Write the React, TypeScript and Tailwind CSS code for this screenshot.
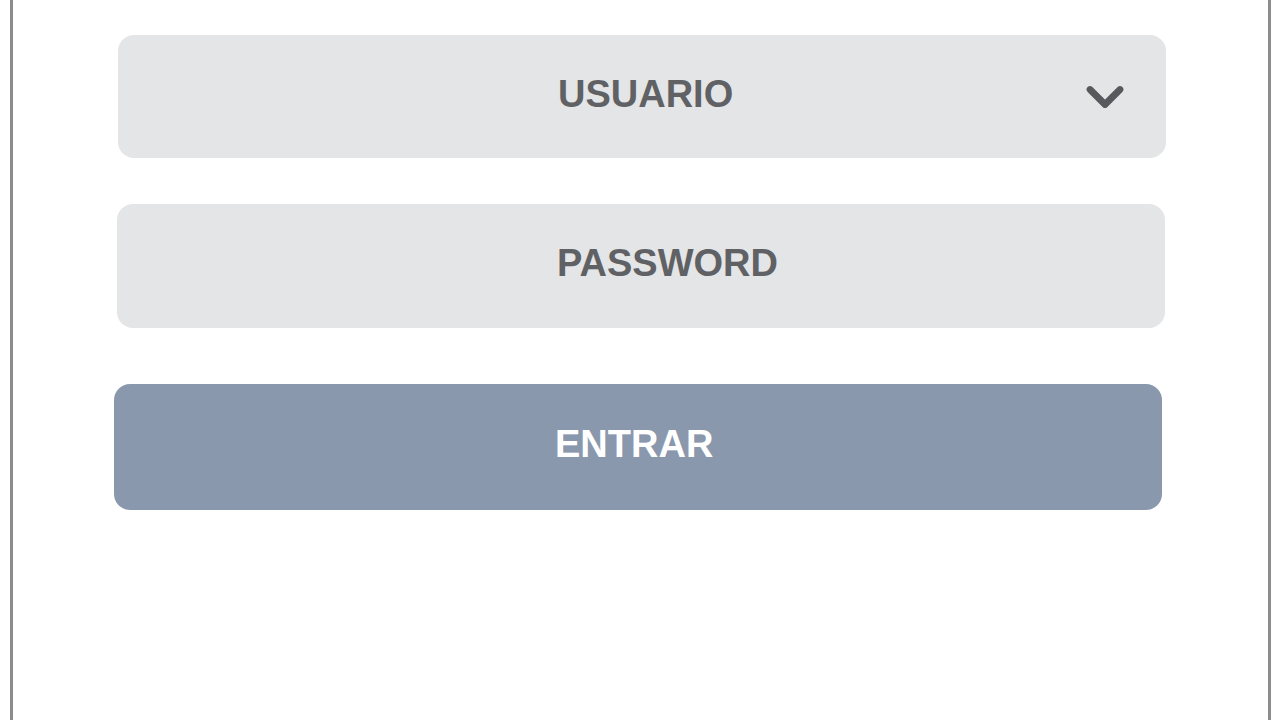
import {ChevronDown} from "lucide-react";

export default function App() {
  return (
    <div className="w-[1280px] h-[720px] bg-white overflow-hidden font-['Liberation_Sans',Arial,sans-serif]">
      <div className="ml-[10px] w-[1261px] h-full border-x-[3px] border-[#8c8c8c] flex flex-col">
        {/* Usuario select */}
        <div className="mt-[35px] ml-[105px] w-[1048px] h-[123px] rounded-[16px] bg-[#e4e5e7] flex items-center relative">
          <span className="pl-[440px] pb-[6px] text-[38px] font-bold text-[#606164] leading-none">
            USUARIO
          </span>
          <ChevronDown
            className="absolute right-[31px] top-[32px] w-[60px] h-[60px] text-[#58595c]"
            strokeWidth={2.7}
          />
        </div>

        {/* Password */}
        <div className="mt-[46px] ml-[104px] w-[1048px] h-[124px] rounded-[16px] bg-[#e4e5e7] flex items-center">
          <span className="pl-[440px] pb-[6px] text-[38px] font-bold text-[#606164] leading-none">
            PASSWORD
          </span>
        </div>

        {/* Entrar */}
        <button className="mt-[56px] ml-[101px] w-[1048px] h-[126px] rounded-[16px] bg-[#8a98ad] flex items-center">
          <span className="pl-[441px] pb-[6px] text-[38px] font-bold text-white leading-none">
            ENTRAR
          </span>
        </button>
      </div>
    </div>
  );
}
